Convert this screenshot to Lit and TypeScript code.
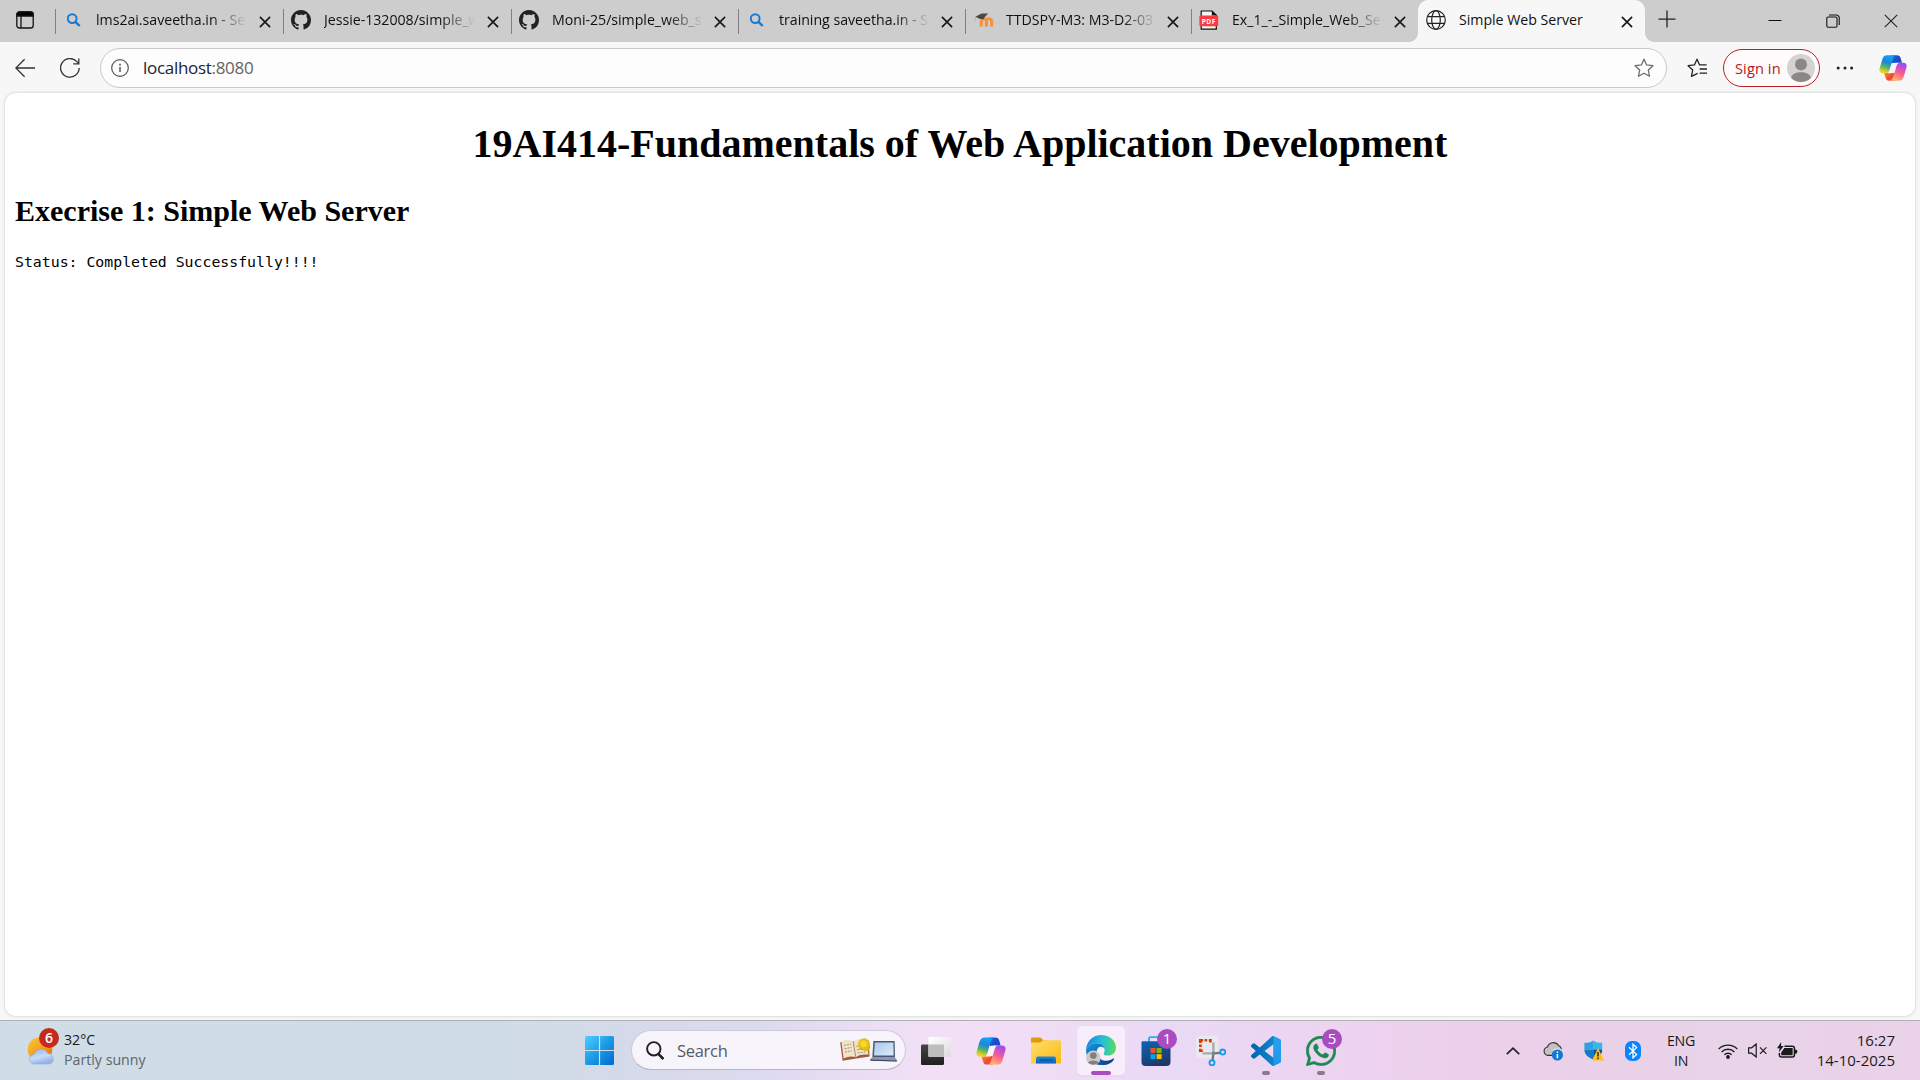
import { LitElement, html, css, nothing, type TemplateResult } from "lit";
import { customElement } from "lit/decorators.js";
import { classMap } from "lit/directives/class-map.js";

const copilot = (id: string, w: number, h: number) => html`
  <svg width=${w} height=${h} viewBox="0 0 30 28" preserveAspectRatio="none">
    <defs>
      <linearGradient id="${id}a" x1="0.6" y1="0" x2="0.3" y2="1">
        <stop offset="0.1" stop-color="#10a0ee" /><stop offset="0.4" stop-color="#1f85d8" />
        <stop offset="0.66" stop-color="#4fb763" /><stop offset="0.95" stop-color="#f5d21f" />
      </linearGradient>
      <linearGradient id="${id}b" x1="0.7" y1="0" x2="0.3" y2="1">
        <stop offset="0.05" stop-color="#a24bf2" /><stop offset="0.5" stop-color="#f65a98" />
        <stop offset="0.95" stop-color="#ffb066" />
      </linearGradient>
      <linearGradient id="${id}c" x1="0" y1="0" x2="1" y2="0.6">
        <stop offset="0" stop-color="#1287e0" /><stop offset="0.5" stop-color="#1a4fd2" /><stop offset="1" stop-color="#1b48c4" />
      </linearGradient>
      <linearGradient id="${id}d" x1="0" y1="0" x2="1" y2="1">
        <stop offset="0" stop-color="#f7a02a" /><stop offset="0.6" stop-color="#ee4a2c" /><stop offset="1" stop-color="#f0506a" />
      </linearGradient>
    </defs>
    <path fill="url(#${id}c)" d="M13 .4H19.2C21.6.4 22.6 1.6 23.2 3.6L24.6 8.4H20.2C17.6 8.4 16.9 9.6 16.4 10.4L13 8Z" />
    <path fill="url(#${id}d)" d="M17 27.6H10.8C8.4 27.6 7.6 26.2 7 24.2L5.4 19.4H8.2C11.6 19.4 12.6 18.4 13.4 17.6L17 20Z" />
    <path fill="url(#${id}a)" d="M8.8.4H18.4C15.8.7 15.2 3 14.2 6.4L11.6 15.2C10.6 18.6 9.4 19.6 6 19.6H4.2C.8 19.6-.2 17.3.8 14L3.6 4.6C4.6 1.4 6 .4 8.8.4Z" />
    <path fill="url(#${id}b)" d="M21.2 27.6H11.6C14.2 27.3 14.8 25 15.8 21.6L18.4 12.8C19.4 9.4 20.6 8.4 24 8.4H25.8C29.2 8.4 30.2 10.7 29.2 14L26.4 23.4C25.4 26.6 24 27.6 21.2 27.6Z" />
    <path fill="#fbf3fb" d="M20.4 8.4C18.6 8.9 18.9 10.6 18.2 13L16.7 18C16 19.4 14.6 19.6 9.6 19.6C11.4 18.6 11.5 16.8 12.2 14.4L13.4 10.4C13.9 8.6 15.4 8.4 20.4 8.4Z" />
  </svg>`;

const searchTab = html`<svg width="20" height="20" viewBox="0 0 20 20" fill="none" stroke="#1778d2" stroke-width="1.9">
  <circle cx="9.2" cy="8.6" r="4.4" /><path d="M12.4 11.8L16.7 16" stroke-width="2.4" /></svg>`;

const github = html`<svg width="20" height="20" viewBox="0 0 16 16" fill="#1f2328"><path d="M8 0C3.58 0 0 3.58 0 8c0 3.54 2.29 6.53 5.47 7.59.4.07.55-.17.55-.38 0-.19-.01-.82-.01-1.49-2.01.37-2.53-.49-2.69-.94-.09-.23-.48-.94-.82-1.13-.28-.15-.68-.52-.01-.53.63-.01 1.08.58 1.23.82.72 1.21 1.87.87 2.33.66.07-.52.28-.87.51-1.07-1.78-.2-3.64-.89-3.64-3.95 0-.87.31-1.59.82-2.15-.08-.2-.36-1.02.08-2.12 0 0 .67-.21 2.2.82.64-.18 1.32-.27 2-.27s1.36.09 2 .27c1.53-1.04 2.2-.82 2.2-.82.44 1.1.16 1.92.08 2.12.51.56.82 1.27.82 2.15 0 3.07-1.87 3.75-3.65 3.95.29.25.54.73.54 1.48 0 1.07-.01 1.93-.01 2.2 0 .21.15.46.55.38A8.01 8.01 0 0 0 16 8c0-4.42-3.58-8-8-8Z"/></svg>`;

const moodle = html`<svg width="21" height="20" viewBox="0 0 21 20">
  <path d="M8.3 16.6V11.4a2.6 2.6 0 0 1 5.2 0V16.6M13.5 11.4a2.6 2.6 0 0 1 5.2 0V16.6" fill="none" stroke="#f7923a" stroke-width="3.1" />
  <path d="M2.4 6.8L8.5 3.6 15.2 3.4 11.4 7.6 10.8 9.2 6.4 8.8Z" fill="#4b4745" />
  <path d="M2.6 7L1.9 11.4" stroke="#d9a184" stroke-width=".8" /></svg>`;

const pdf = html`<svg width="20" height="20" viewBox="0 0 20 20">
  <path d="M2.2 1H13l4.3 4.2V19.2H2.2Z" fill="#f4f4f4" stroke="#111" stroke-width="1.2" />
  <path d="M12.8.6V5.4H17.8Z" fill="#111" />
  <rect x=".4" y="5.6" width="18.8" height="10.6" rx="1" fill="#fa3c41" />
  <text x="9.8" y="13.7" text-anchor="middle" class="pdf">PDF</text></svg>`;

const globe = html`<svg width="20" height="20" viewBox="0 0 20 20" fill="none" stroke="#222" stroke-width="1.2">
  <circle cx="10" cy="10" r="9.3" /><ellipse cx="10" cy="10" rx="4.3" ry="9.3" /><path d="M1.5 6.7H18.5M1.5 13.3H18.5" /></svg>`;

const closeIcon = html`<svg width="12" height="12" viewBox="0 0 12 12" stroke="#161616" stroke-width="1.6"><path d="M.9.9L11.1 11.1M11.1.9L.9 11.1" /></svg>`;

const starPath = "M10 1.2L12.6 6.9 18.9 7.7 14.3 12 15.5 18.2 10 15.2 4.5 18.2 5.7 12 1.1 7.7 7.4 6.9Z";

interface Tab { icon: TemplateResult; title: string; active?: boolean; }

const tabs: Tab[] = [
  { icon: searchTab, title: "lms2ai.saveetha.in - Sea" },
  { icon: github, title: "Jessie-132008/simple_w" },
  { icon: github, title: "Moni-25/simple_web_s" },
  { icon: searchTab, title: "training saveetha.in - S" },
  { icon: moodle, title: "TTDSPY-M3: M3-D2-03" },
  { icon: pdf, title: "Ex_1_-_Simple_Web_Se" },
  { icon: globe, title: "Simple Web Server", active: true },
];

const taskView = html`<svg width="30" height="28" viewBox="0 0 30 28"><defs>
  <linearGradient id="tv1" x1="0" y1="0" x2="0" y2="1"><stop stop-color="#454545" /><stop offset="1" stop-color="#1f1f1f" /></linearGradient>
  <linearGradient id="tv2" x1="0" y1="0" x2="1" y2="1"><stop stop-color="#fff" /><stop offset="1" stop-color="#dcdcdc" /></linearGradient></defs>
  <rect x="0" y="7.6" width="23" height="20.4" rx="1.2" fill="url(#tv1)" />
  <rect x="7.4" y="0" width="22.4" height="20" rx="1.2" fill="url(#tv2)" />
  <path d="M7.4 7.6H22A1 1 0 0 1 23 8.6V20H8.4A1 1 0 0 1 7.4 19Z" fill="#bdbdbd" /></svg>`;

const folder = html`<svg width="30" height="27" viewBox="0 0 30 27"><defs>
  <linearGradient id="fo1" x1="0" y1="0" x2="1" y2="1"><stop stop-color="#ffdf6e" /><stop offset="1" stop-color="#fbb912" /></linearGradient>
  <linearGradient id="fo2" x1="0" y1="0" x2="0" y2="1"><stop stop-color="#168ae0" /><stop offset="1" stop-color="#0f63b8" /></linearGradient></defs>
  <path d="M0 1.6A1.2 1.2 0 0 1 1.2.4H9.4L12.6 3.4H18V8H0Z" fill="#dd9c06" />
  <path d="M0 5.4H9.4L12.4 3.2H28.8A1.2 1.2 0 0 1 30 4.4V25.4A1.2 1.2 0 0 1 28.8 26.6H1.2A1.2 1.2 0 0 1 0 25.4Z" fill="url(#fo1)" />
  <path d="M5 26.6V21.4A2 2 0 0 1 7 19.4H23A2 2 0 0 1 25 21.4V26.6Z" fill="url(#fo2)" />
  <path d="M8.6 23H21.6" stroke="#0a3f86" stroke-width="1" /></svg>`;

const edge = html`<svg width="30" height="31" viewBox="0 0 30 31"><defs>
  <linearGradient id="ed1" x1="0" y1="0.5" x2="1" y2="0.6"><stop stop-color="#1683d8" /><stop offset=".45" stop-color="#27b8df" /><stop offset=".75" stop-color="#36cfa4" /><stop offset="1" stop-color="#62dc4a" /></linearGradient>
  <linearGradient id="ed2" x1="0" y1="0" x2="0.6" y2="1"><stop stop-color="#1598df" /><stop offset="1" stop-color="#0b55a4" /></linearGradient>
  <linearGradient id="ed3" x1="0" y1="0" x2="1" y2="0.3"><stop stop-color="#1764b8" /><stop offset="1" stop-color="#0b3f84" /></linearGradient></defs>
  <path d="M.1 14.4C.7 6.3 7 .1 15 .1 24 .1 30 6 30 12.8 30 17.4 26.4 20.6 22 20.6 18.6 20.6 17.2 19.4 17.8 18.4 20.4 14.5 17.2 8.6 10.8 8.3 5.6 8.1 1.5 10.8.1 14.4Z" fill="url(#ed1)" />
  <path d="M.1 14.4C1.5 10.8 5.6 8.1 10.8 8.3 15.2 8.5 18 11 18.6 13.9 17.8 12.4 16 11.4 14 11.8 9 13 8.6 24 17.6 29.9 7.4 31.4-.6 23.6.1 14.4Z" fill="url(#ed2)" />
  <path d="M12.2 13.2C8.8 17.2 11.6 25 19.2 25.8 23 26.2 25.6 24.6 27.4 23.6 28 23.3 28.4 23.8 28 24.4 25.6 28 22 29.9 17.6 30 12 29.4 6.4 21 12.2 13.2Z" fill="url(#ed3)" />
  <circle cx="7.3" cy="22.8" r="7.3" fill="#cfcbc9" /><circle cx="7.3" cy="20.6" r="3.4" fill="#85807d" />
  <path d="M2 27.6C3.4 24.8 11.2 24.8 12.6 27.6 9.8 30.4 4.8 30.4 2 27.6Z" fill="#85807d" /></svg>`;

const store = html`<svg width="30" height="30" viewBox="0 0 30 30"><defs>
  <linearGradient id="st1" x1="0" y1="0" x2=".5" y2="1"><stop stop-color="#0d64b6" /><stop offset="1" stop-color="#1d3a66" /></linearGradient></defs>
  <path d="M8 7V2.6A1.5 1.5 0 0 1 9.5 1.1H20.5A1.5 1.5 0 0 1 22 2.6V7" fill="none" stroke="#1db3f2" stroke-width="1.8" />
  <path d="M.5 6.2A1 1 0 0 1 1.5 5.2H28.5A1 1 0 0 1 29.5 6.2V26A4 4 0 0 1 25.5 30H4.5A4 4 0 0 1 .5 26Z" fill="url(#st1)" />
  <path d="M9.5 12H14.5V17H9.5Z" fill="#f25022" /><path d="M15.6 12H20.6V17H15.6Z" fill="#7fba00" />
  <path d="M9.5 18.1H14.5V23.1H9.5Z" fill="#00a4ef" /><path d="M15.6 18.1H20.6V23.1H15.6Z" fill="#ffb900" /></svg>`;

const snip = html`<svg width="30" height="30" viewBox="0 0 30 30">
  <rect x="0" y="0" width="22.4" height="22" rx="2" fill="#e9e9ec" />
  <path d="M3 3H7.2V5.6H5.8V7H3ZM8.6 3H11.2V5.6H8.6ZM12.8 3H15.8V6.6H13.2V5.6H12.8ZM3 8.4H5.8V11H3ZM3 12.8H5.4V13.4H6.8V16H3Z" fill="#d83b01" />
  <path d="M17.4 6.4V17.4H6.6" fill="none" stroke="#a5abb0" stroke-width="2.4" />
  <path d="M17.4 17.4L24 16.8M17.4 17.4L16.6 24" stroke="#6d757b" stroke-width="2.2" />
  <circle cx="17.4" cy="17.4" r="1.8" fill="#7b848a" />
  <g fill="none" stroke="#1e9be4" stroke-width="1.9"><circle cx="26.8" cy="16" r="2.5" /><circle cx="16" cy="26.8" r="2.5" /></g></svg>`;

const vscode = html`<svg width="30" height="30" viewBox="0 0 24 24"><defs>
  <linearGradient id="vs1" x1="0" y1="0" x2="1" y2="0"><stop stop-color="#0466ab" /><stop offset=".7" stop-color="#0c82cd" /></linearGradient>
  <linearGradient id="vs2" x1="0" y1="0" x2="0" y2="1"><stop stop-color="#2ba0ea" /><stop offset="1" stop-color="#1d97ee" /></linearGradient></defs>
  <path fill="url(#vs1)" d="M23.15 2.587L18.21.21a1.494 1.494 0 0 0-1.705.29l-9.46 8.63-4.12-3.128a.999.999 0 0 0-1.276.057L.327 7.261A1 1 0 0 0 .326 8.74L3.899 12 .326 15.26a1 1 0 0 0 .001 1.479L1.65 17.94a.999.999 0 0 0 1.276.057l4.12-3.128 9.46 8.63a1.492 1.492 0 0 0 1.704.29l4.942-2.377A1.5 1.5 0 0 0 24 20.06V3.939a1.5 1.5 0 0 0-.85-1.352zm-5.146 14.861L10.826 12l7.178-5.448v10.896z" />
  <path fill="url(#vs2)" d="M18.004.13 23.15 2.587A1.5 1.5 0 0 1 24 3.939V20.06A1.5 1.5 0 0 1 23.15 21.41L18.21 23.79 17.2 23.9Q18 23.5 18.004 22.6V1.4Q18 .4 17.2.1Z" /></svg>`;

const whatsapp = html`<svg width="30" height="30" viewBox="0 0 24 24" fill="#1a8a52"><path d="M17.472 14.382c-.297-.149-1.758-.867-2.03-.967-.273-.099-.471-.148-.67.15-.197.297-.767.966-.94 1.164-.173.199-.347.223-.644.075-.297-.15-1.255-.463-2.39-1.475-.883-.788-1.48-1.761-1.653-2.059-.173-.297-.018-.458.13-.606.134-.133.298-.347.446-.52.149-.174.198-.298.298-.497.099-.198.05-.371-.025-.52-.075-.149-.669-1.612-.916-2.207-.242-.579-.487-.5-.669-.51-.173-.008-.371-.01-.57-.01-.198 0-.52.074-.792.372-.272.297-1.04 1.016-1.04 2.479 0 1.462 1.065 2.875 1.213 3.074.149.198 2.096 3.2 5.077 4.487.709.306 1.262.489 1.694.625.712.227 1.36.195 1.871.118.571-.085 1.758-.719 2.006-1.413.248-.694.248-1.289.173-1.413-.074-.124-.272-.198-.57-.347m-5.421 7.403h-.004a9.87 9.87 0 01-5.031-1.378l-.361-.214-3.741.982.998-3.648-.235-.374a9.86 9.86 0 01-1.51-5.26c.001-5.45 4.436-9.884 9.888-9.884 2.64 0 5.122 1.03 6.988 2.898a9.825 9.825 0 012.893 6.994c-.003 5.45-4.437 9.884-9.885 9.884m8.413-18.297A11.815 11.815 0 0012.05 0C5.495 0 .16 5.335.157 11.892c0 2.096.547 4.142 1.588 5.945L.057 24l6.305-1.654a11.882 11.882 0 005.683 1.448h.005c6.554 0 11.89-5.335 11.893-11.893a11.821 11.821 0 00-3.48-8.413z" stroke="#1a8a52" stroke-width=".3" /></svg>`;

interface App { icon: TemplateResult; badge?: string; active?: boolean; running?: boolean; }

const apps: App[] = [
  { icon: taskView },
  { icon: copilot("cpb", 30, 28) },
  { icon: folder },
  { icon: edge, active: true },
  { icon: store, badge: "1" },
  { icon: snip },
  { icon: vscode, running: true },
  { icon: whatsapp, badge: "5", running: true },
];

@customElement("browser-tabs")
export class BrowserTabs extends LitElement {
  static styles = css`
    :host { display: grid; height: 42px; box-sizing: border-box; background: #cdcdcd; color: #111;
      grid-template-columns: 55px 228px 228px 227px 227px 226px 227px 227px 44px 1fr 58px 58px 58px;
      font: 14.2px/20px "Open Sans", "Noto Sans", sans-serif; }
    .workspace { padding: 11px 0 0 16px; }
    .tab { display: flex; align-items: center; height: 42px; box-sizing: border-box; padding: 0 12.5px 2px 8px; }
    .tab:not(.active) { background: linear-gradient(#808080, #808080) 0 9px / 1px 25px no-repeat; }
    .icon { display: flex; width: 21px; margin-right: 12px; flex: none; }
    .title { width: 152px; height: 20px; flex: none; overflow: hidden; white-space: nowrap; letter-spacing: -0.03px;
      -webkit-mask-image: linear-gradient(to right, #000 116px, transparent 151px); }
    .active .title { -webkit-mask-image: none; }
    .close { display: flex; margin: 3px 0 0 auto; }
    .active { position: relative; background: #f7f7f7; border-radius: 10px 10px 0 0; }
    .active::before, .active::after { content: ""; position: absolute; bottom: 0; width: 9px; height: 9px; }
    .active::before { left: -9px; background: radial-gradient(circle at 0 0, transparent 8.5px, #f7f7f7 9.2px); }
    .active::after { right: -9px; background: radial-gradient(circle at 100% 0, transparent 8.5px, #f7f7f7 9.2px); }
    .plus { padding: 10px 0 0 13px; }
    .ctl { display: flex; justify-content: center; align-items: center; }
    .pdf { font: 700 6.6px "Open Sans", sans-serif; fill: #fff; letter-spacing: .5px; }
    svg { display: block; }
  `;
  render() {
    return html`
      <div class="workspace"><svg width="18" height="18" viewBox="0 0 18 18" fill="none" stroke="#111" stroke-width="1.3">
        <rect x=".8" y="1" width="16.4" height="16" rx="2.6" /><path d="M1 3.4A2.4 2.4 0 0 1 3.4 1H14.6A2.4 2.4 0 0 1 17 3.4V5H1Z" fill="#000" /><path d="M5 5V17" /></svg></div>
      ${tabs.map((t) => html`<div class=${classMap({ tab: true, active: !!t.active })}>
        <span class="icon">${t.icon}</span><span class="title">${t.title}</span><span class="close">${closeIcon}</span></div>`)}
      <div class="plus"><svg width="18" height="18" viewBox="0 0 18 18" stroke="#222" stroke-width="1.3"><path d="M9 .5V17.5M.5 9.2H17.5" /></svg></div>
      <div></div>
      <div class="ctl"><svg width="14" height="14" viewBox="0 0 14 14" stroke="#111"><path d="M.5 6.5H13.5" /></svg></div>
      <div class="ctl"><svg width="14" height="14" viewBox="0 0 14 14" fill="none" stroke="#111" stroke-width="1.1"><rect x=".8" y="3" width="10.2" height="10.2" rx="1.2" /><path d="M3 1H10.4A2.8 2.8 0 0 1 13.2 3.8V11" /></svg></div>
      <div class="ctl"><svg width="14" height="14" viewBox="0 0 14 14" stroke="#222" stroke-width="1.1"><path d="M.8.8L13.2 13.2M13.2.8L.8 13.2" /></svg></div>`;
  }
}

@customElement("browser-toolbar")
export class BrowserToolbar extends LitElement {
  static styles = css`
    :host { display: flex; align-items: center; height: 51px; box-sizing: border-box; padding: 0 13px 0 15px; background: #f7f7f7; }
    svg { display: block; flex: none; }
    .reload { margin: 0 20px 0 25px; }
    .address { display: flex; align-items: center; flex: none; width: 1567px; height: 40px; box-sizing: border-box; padding: 0 12px 0 10px;
      border: 1px solid #c9c9c9; border-radius: 20px; background: #fdfdfd; }
    .url { flex: 1; padding-left: 14px; font: 17px/24px "Open Sans", "Noto Sans", sans-serif; letter-spacing: -0.3px; color: #22223a; }
    .port { color: #66625f; }
    .fav { margin-left: 20px; }
    .signin { display: flex; align-items: center; justify-content: space-between; flex: none; width: 97px; height: 38px; box-sizing: border-box; margin-left: 16px; padding: 0 4px 0 11px;
      border: 1.5px solid #bc2026; border-radius: 19px; background: #fdfbfb; color: #b8181e; font: 14.6px/20px "Open Sans", "Noto Sans", sans-serif; letter-spacing: 0.1px; white-space: nowrap; }
    .more { margin-left: 16px; }
    .copilot { margin-left: auto; }
  `;
  render() {
    return html`
      <svg width="20" height="20" viewBox="0 0 20 20" fill="none" stroke="#333" stroke-width="1.3"><path d="M20 10H1M9.6 1.2L.9 10 9.6 18.8" /></svg>
      <svg class="reload" width="20" height="20" viewBox="0 0 20 20" fill="none" stroke="#333" stroke-width="1.3"><path d="M19.2 10A9.3 9.3 0 1 1 16.6 3.4L18.6 5.4M18.8.4V5.8H13.2" /></svg>
      <div class="address">
        <svg width="18" height="18" viewBox="0 0 18 18" fill="none" stroke="#555" stroke-width="1.2"><circle cx="9" cy="9" r="8.3" /><path d="M9 8V13" stroke-width="1.5" /><path d="M9 4.8V6.4" stroke-width="1.7" /></svg>
        <span class="url">localhost<span class="port">:8080</span></span>
        <svg width="20" height="20" viewBox="0 0 20 20" fill="none" stroke="#6d6d6d" stroke-width="1.3" stroke-linejoin="round"><path d=${starPath} /></svg>
      </div>
      <svg class="fav" width="20" height="20" viewBox="0 0 20 20" fill="none" stroke="#222" stroke-width="1.3" stroke-linejoin="round"><path d="M10 15.2L4.5 18.2 5.7 12 1.1 7.7 7.4 6.9 10 1.2 12.6 6.4M12.4 9.8H20M12.4 13.4H20M12.4 6.4H18.4M13.6 17H20" stroke="none" /><path d="M10.6 15.4L4.5 18.4 5.7 12 1.1 7.7 7.4 6.9 10 1.2 12.6 6.9H19.6M12.6 11H20M12.6 15.2H20" /></svg>
      <div class="signin"><span>Sign in</span>
        <svg width="28" height="28" viewBox="0 0 28 28"><circle cx="14" cy="14" r="14" fill="#d5d3d1" /><circle cx="14" cy="10.5" r="6" fill="#8b8784" /><path d="M4.2 24C4.5 16.4 23.5 16.4 23.8 24 19 29.3 9 29.3 4.2 24Z" fill="#8b8784" /></svg>
      </div>
      <svg class="more" width="18" height="6" viewBox="0 0 18 6" fill="#222"><circle cx="2.2" cy="3" r="1.5" /><circle cx="9" cy="3" r="1.5" /><circle cx="15.6" cy="3" r="1.5" /></svg>
      <div class="copilot">${copilot("cpa", 28, 26)}</div>`;
  }
}

@customElement("web-page")
export class WebPage extends LitElement {
  static styles = css`
    :host { display: block; height: 923px; box-sizing: border-box; margin: 0 5px; padding: 28px 10px 0; background: #fff; border-radius: 11px; box-shadow: 0 0 2px 1px #dedede; color: #000; }
    .title { margin: 0 0 27px; text-align: center; font: 700 40px/46px "Liberation Serif", "Times New Roman", serif; }
    .sub { margin: 0 0 25px; font: 700 30px/34px "Liberation Serif", "Times New Roman", serif; }
    .status { margin: 0; font: 14.83px/18px "DejaVu Sans Mono", monospace; }
  `;
  render() {
    return html`<h1 class="title">19AI414-Fundamentals of Web Application Development</h1>
      <h2 class="sub">Execrise 1: Simple Web Server</h2>
      <pre class="status">Status: Completed Successfully!!!!</pre>`;
  }
}

@customElement("task-bar")
export class TaskBar extends LitElement {
  static styles = css`
    :host { display: flex; height: 60px; box-sizing: border-box; border-top: 1px solid #aeb0b6; color: #1b1b1b;
      font: 14.2px/20px "Open Sans", "Noto Sans", sans-serif; letter-spacing: -0.25px;
      background: linear-gradient(90deg, #cfdde6 0, #cfdce6 500px, #d5daea 620px, #dcdaef 760px, #efdff5 900px, #f3dff6 960px, #ead9f5 1180px, #edd2ef 1380px, #eccfe9 1500px, #e8d3e8 1720px, #ead2e8 1920px); }
    svg { display: block; flex: none; }
    .weather { display: flex; flex: none; width: 572px; box-sizing: border-box; padding: 9px 0 0 27px; }
    .wicon { position: relative; width: 28px; margin: 7px 9px 0 0; flex: none; }
    .badge { position: absolute; width: 20px; height: 20px; border-radius: 50%; background: #a94cbf; color: #fff; text-align: center; font-size: 14px; line-height: 19px; }
    .wicon .badge { left: 12px; top: -9px; background: #c42b1c; font-weight: 600; }
    .label { letter-spacing: 0; }
    .dim { color: #5b656c; }
    .start { width: 55px; display: flex; justify-content: center; align-items: center; flex: none; }
    .search { display: flex; align-items: center; flex: none; width: 275px; height: 40px; box-sizing: border-box; margin: 9px 2px 0 4px; padding: 0 8px 0 14px; border: 1px solid #cfc9dd; border-bottom-color: #b9b3c8; border-radius: 20px; background: #f7f4fb; }
    .stext { flex: 1; padding: 2px 0 0 13px; font-size: 16.5px; letter-spacing: -0.3px; color: #5a5a60; }
    .app { position: relative; display: flex; justify-content: center; align-items: center; flex: none; width: 55px; height: 59px; }
    .tile { display: flex; justify-content: center; align-items: center; width: 48px; height: 49px; box-sizing: border-box; border-radius: 5px; }
    .active .tile { background: #f8eefb; box-shadow: 0 0 0 1px #eadcef, 0 1px 1px 0 #d3c2d8; }
    .app .badge { right: 6px; top: 8px; font-size: 15px; }
    .mark { position: absolute; left: 50%; bottom: 5px; width: 8px; height: 4px; margin-left: -4px; border-radius: 2px; background: #8a7a8e; }
    .active .mark { width: 20px; margin-left: -10px; background: #a94cbf; }
    .tray { display: flex; flex: 1; align-items: center; padding: 0 25px 0 0; justify-content: flex-end; }
    .cloud { margin-left: 23px; }
    .shield { margin-left: 21px; }
    .bluetooth { margin-left: 21px; }
    .speaker { margin-left: 10px; }
    .battery { margin-left: 9px; }
    .lang { width: 40px; margin: 0 17px 0 20px; text-align: center; }
    .clock { width: 89px; margin-left: 8px; padding-bottom: 2px; text-align: right; white-space: nowrap; font-size: 15px; letter-spacing: 0; }
  `;
  render() {
    return html`
      <div class="weather">
        <div class="wicon"><svg width="28" height="28" viewBox="0 0 28 28"><defs>
          <linearGradient id="w1" x1="0" y1="0" x2=".8" y2="1"><stop stop-color="#f6cb3c" /><stop offset=".6" stop-color="#f59a1c" /><stop offset="1" stop-color="#e8661a" /></linearGradient>
          <linearGradient id="w2" x1="0" y1="0" x2=".4" y2="1"><stop stop-color="#8fb6ef" /><stop offset=".6" stop-color="#c8dbf8" /><stop offset="1" stop-color="#93b3ea" /></linearGradient></defs>
          <circle cx="13" cy="12.5" r="12.3" fill="url(#w1)" />
          <path d="M7.6 27A4.9 4.9 0 0 1 7.2 17.2 7.3 7.3 0 0 1 20.8 16.6 5.3 5.3 0 0 1 22.4 27Z" fill="url(#w2)" stroke="#7ea3e2" stroke-width=".5" /></svg>
          <span class="badge">6</span></div>
        <div class="label"><div>32°C</div><div class="dim">Partly sunny</div></div>
      </div>
      <div class="start"><svg width="29" height="29" viewBox="0 0 29 29"><defs>
        <linearGradient id="s1" gradientUnits="userSpaceOnUse" x1="0" y1="0" x2="29" y2="29"><stop stop-color="#4fd0ff" /><stop offset=".5" stop-color="#1c9be6" /><stop offset="1" stop-color="#0269cc" /></linearGradient></defs>
        <path fill="url(#s1)" d="M1.5 0H13.9V13.9H0V1.5A1.5 1.5 0 0 1 1.5 0ZM15.1 0H27.5A1.5 1.5 0 0 1 29 1.5V13.9H15.1ZM0 15.1H13.9V29H1.5A1.5 1.5 0 0 1 0 27.5ZM15.1 15.1H29V27.5A1.5 1.5 0 0 1 27.5 29H15.1Z" /></svg></div>
      <div class="search">
        <svg width="18" height="19" viewBox="0 0 18 19" fill="none" stroke="#1f1f24" stroke-width="1.9"><circle cx="7.8" cy="7.8" r="6.7" /><path d="M12.4 12.8L17.3 18" stroke-width="2.6" /></svg>
        <span class="stext">Search</span>
        <svg width="57" height="24" viewBox="0 0 57 24"><defs>
          <linearGradient id="lp" x1="0" y1="0" x2="1" y2="1"><stop stop-color="#a9c7ee" /><stop offset="1" stop-color="#dcecfb" /></linearGradient></defs>
          <path d="M.2 4.2L13.2 3 28.6 2.4 29.6 18.4 16.6 20.4 2.6 22.8Z" fill="#a2593f" />
          <path d="M1.4 3.4C5 1.4 10 1.4 13.2 3.4 17 1 23 .8 27 2L28.4 16.8C24 16.2 19 16.8 15.8 19.2 12 17.8 7.6 18.4 3.6 20.6Z" fill="#efe3c8" />
          <path d="M13.2 3.4L15.8 19.4" stroke="#a48e6c" stroke-width="1" /><path d="M4 7.4L11 6M4.6 10.8L11.4 9.4M5 14L12 12.8M16.4 8.4L21 7.6M17 11.8L25 10.4M17.6 15L26 13.8" stroke="#a3957a" stroke-width="1" stroke-dasharray="2 1" />
          <circle cx="24" cy="6.2" r="6" fill="#e8bf0b" /><circle cx="23.6" cy="5.8" r="3.4" fill="#f3d53c" /><path d="M19 10.6L28 12.6 30 8" stroke="#d9ae08" stroke-width="1.2" fill="none" />
          <path d="M33.4 3H54.6L55 19H32.4Z" fill="#4c5670" /><path d="M34.8 4.6H53.4L53.6 17.4H34Z" fill="url(#lp)" />
          <path d="M32.4 19H54.8L57 22.4 56.6 23.4 30.4 22.4 30 21.4Z" fill="#8d97b4" /><path d="M30 21.6L57 22.6V23.6L30.6 22.8Z" fill="#3e4660" /></svg>
      </div>
      ${apps.map((a) => html`<div class=${classMap({ app: true, active: !!a.active })}><span class="tile">${a.icon}</span>
        ${a.badge ? html`<span class="badge">${a.badge}</span>` : nothing}
        ${a.active || a.running ? html`<span class="mark"></span>` : nothing}</div>`)}
      <div class="tray">
        <svg width="14" height="8" viewBox="0 0 14 8" fill="none" stroke="#222" stroke-width="1.7"><path d="M.8 7.2L7 1.2 13.2 7.2" /></svg>
        <svg class="cloud" width="20" height="20" viewBox="0 0 20 20"><path d="M4.6 14.4A4.3 4.3 0 0 1 4.4 6 6.3 6.3 0 0 1 15.6 4.4 4.8 4.8 0 0 1 18.4 8V14.4Z" fill="#c3c3c3" stroke="#333" stroke-width="1.1" /><path d="M10 20V8.6Q14 5.6 20 8.8V20Z" fill="#eed2ec" /><circle cx="14.4" cy="14" r="5.6" fill="#1279d3" /><path d="M14.4 13V17.2M14.4 10.4V12" stroke="#fff" stroke-width="1.5" /></svg>
        <svg class="shield" width="20" height="21" viewBox="0 0 20 21"><path d="M9.3.4C12 2.6 15 2.8 18.2 2.8V9.4H9.3Z" fill="#38b6ea" /><path d="M9.3.4C6.6 2.6 3.6 2.8.4 2.8V9.4H9.3Z" fill="#2f9fe0" /><path d="M.4 9.4H9.3V19.4C4 17.4.4 14.4.4 9.4Z" fill="#1479c9" /><path d="M9.3 9.4H18.2C18.2 14.4 14.6 17.4 9.3 19.4Z" fill="#0c4f98" /><path d="M14 8L20 20.4H8Z" fill="#ffc20e" /><path d="M14 12V16.6M14 17.6V19.2" stroke="#222" stroke-width="1.4" /></svg>
        <svg class="bluetooth" width="16" height="20" viewBox="0 0 16 20"><rect width="16" height="20" rx="6.6" fill="#0a84ff" /><path d="M4 6.3L11.6 13.4 8 16.8V3.2L11.6 6.6 4 13.7" fill="none" stroke="#fff" stroke-width="1.3" /></svg>
        <div class="lang">ENG<br />IN</div>
        <svg width="20" height="16" viewBox="0 0 20 16" fill="none" stroke="#1b1b1b" stroke-width="1.4"><path d="M.7 6A13.2 13.2 0 0 1 19.3 6M3.6 8.9A9.1 9.1 0 0 1 16.4 8.9M6.4 11.7A5.1 5.1 0 0 1 13.6 11.7" /><circle cx="10" cy="14" r="1.9" fill="#1b1b1b" stroke="none" /></svg>
        <svg class="speaker" width="20" height="15" viewBox="0 0 20 15" fill="none" stroke="#1b1b1b" stroke-width="1.2"><path d="M.6 4.8H3.6L8.2 1V14L3.6 10.2H.6ZM12 4.4L18.4 10.8M18.4 4.4L12 10.8" /></svg>
        <svg class="battery" width="21" height="17" viewBox="0 0 21 17"><path d="M7.5 4.2H15.4A2 2 0 0 1 17.4 6.2V13A2 2 0 0 1 15.4 15H4.4A2 2 0 0 1 2.4 13V11" fill="none" stroke="#1b1b1b" stroke-width="1.5" /><path d="M7.4 6H15.6V13.2H4.2V10.4Z" fill="#1b1b1b" /><path d="M18 7.4A2.2 2.2 0 0 1 20.4 9.6 2.2 2.2 0 0 1 18 11.8Z" fill="#1b1b1b" /><path d="M4.2 0L0 6.2H2.6L1.8 10.4 6.6 4H4Z" fill="#1b1b1b" /></svg>
        <div class="clock">16:27<br />14-10-2025</div>
      </div>`;
  }
}

@customElement("app-root")
export class AppRoot extends LitElement {
  static styles = css`
    :host { display: flex; flex-direction: column; width: 1920px; height: 1080px; overflow: hidden; background: #f7f7f7; }
    .spacer { flex: 1; }
  `;
  render() {
    return html`<browser-tabs></browser-tabs><browser-toolbar></browser-toolbar><web-page></web-page><div class="spacer"></div><task-bar></task-bar>`;
  }
}
